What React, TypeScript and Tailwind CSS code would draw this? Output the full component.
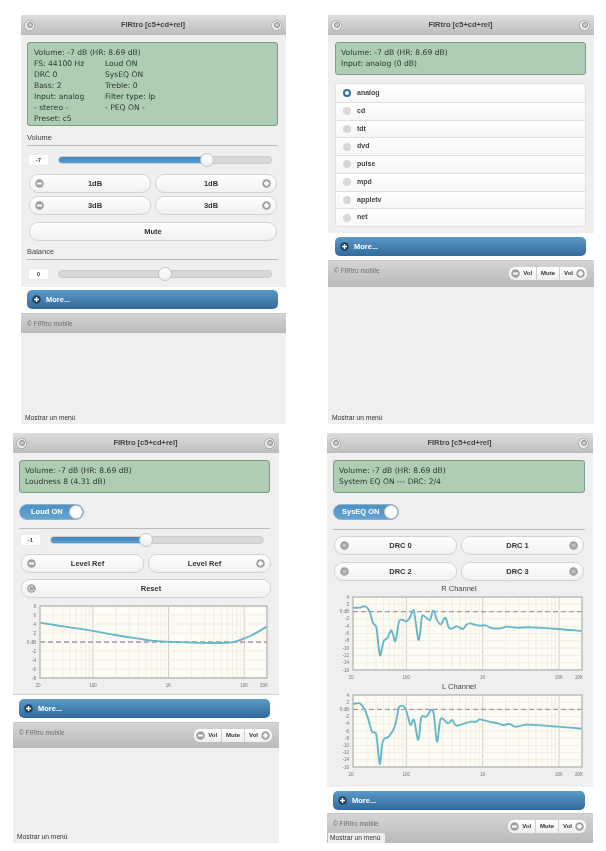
import React from 'react';

type Pt = [number, number];

const smooth = (pts: Pt[]) => {
  let d = `M${pts[0][0]} ${pts[0][1]}`;
  for (let i = 0; i < pts.length - 1; i++) {
    const p0 = pts[i - 1] || pts[i];
    const p1 = pts[i];
    const p2 = pts[i + 1];
    const p3 = pts[i + 2] || p2;
    d += `C${p1[0] + (p2[0] - p0[0]) / 6} ${p1[1] + (p2[1] - p0[1]) / 6} ${p2[0] - (p3[0] - p1[0]) / 6} ${p2[1] - (p3[1] - p1[1]) / 6} ${p2[0]} ${p2[1]}`;
  }
  return d;
};

const toPlot = (pts: number[][], ox: number, oy: number): Pt[] => pts.map(([x, y]) => [(x - ox) / 3, (y - oy) / 3]);

const freqs = [30, 40, 50, 60, 70, 80, 90, 100, 200, 300, 400, 500, 600, 700, 800, 900, 1000, 2000, 3000, 4000, 5000, 6000, 7000, 8000, 9000, 10000];

const Chart: React.FC<{ left: number; w: number; h: number; labels: string[]; zero: number; pts: Pt[] }> = ({ left, w, h, labels, zero, pts }) => {
  const top = 3;
  const step = h / (labels.length - 1);
  const fx = (f: number) => left + (w * Math.log10(f / 20)) / 3;
  return (
    <svg width={left + w + 4} height={top + h + 14} className="block" style={{ fontFamily: '"Liberation Sans", sans-serif' }}>
      <rect x={left} y={top} width={w} height={h} fill="#fdfcf4" />
      {freqs.map((f) => (
        <line key={f} x1={fx(f)} x2={fx(f)} y1={top} y2={top + h} stroke={[100, 1000, 10000].includes(f) ? '#cfcfc8' : '#f0eee2'} strokeWidth="1" />
      ))}
      {labels.map((l, i) => (
        <g key={l}>
          <line x1={left} x2={left + w} y1={top + i * step} y2={top + i * step} stroke="#f0eee2" />
          <text x={left - 4} y={top + i * step + 1.5} fontSize="4.5" textAnchor="end" fill="#777">{l}</text>
        </g>
      ))}
      <line x1={left} x2={left + w} y1={top + zero * step} y2={top + zero * step} stroke="#a896a8" strokeWidth="1.4" strokeDasharray="5 3" />
      <path d={smooth(pts.map(([x, y]) => [x + left, y + top] as Pt))} fill="none" stroke="#66b8c8" strokeWidth="1.9" strokeLinejoin="round" />
      <rect x={left} y={top} width={w} height={h} fill="none" stroke="#b0b0b0" strokeWidth="1.2" />
      {[['20', 20], ['100', 100], ['1K', 1000], ['10K', 10000], ['20K', 20000]].map(([l, f]) => (
        <text key={l} x={fx(f as number) - (f === 20 ? 2 : f === 20000 ? 3 : 0)} y={top + h + 9} fontSize="4.5" textAnchor="middle" fill="#777">{l}</text>
      ))}
    </svg>
  );
};

const Glyph: React.FC<{ kind: 'minus' | 'plus' | 'reset' | 'grid' }> = ({ kind }) => (
  <svg width="9" height="9" viewBox="0 0 18 18" className="shrink-0">
    <circle cx="9" cy="9" r="8.5" fill="#a0a0a0" />
    {kind === 'minus' && <rect x="4" y="7" width="10" height="4" fill="#fff" />}
    {kind === 'plus' && <path d="M4 7h3V4h4v3h3v4h-3v3H7v-3H4z" fill="#fff" />}
    {kind === 'reset' && <path d="M12.5 6.5A4.6 4.6 0 1 0 13.4 10" fill="none" stroke="#fff" strokeWidth="2" />}
    {kind === 'grid' && <path d="M5 6.5h8M5 9h8M5 11.5h8" stroke="#d8d8d8" strokeWidth="1.3" />}
  </svg>
);

const Ring: React.FC = () => (
  <span className="w-[11px] h-[11px] rounded-full bg-[#eeeeee] border border-[#acacac] flex items-center justify-center">
    <span className="w-[6px] h-[6px] rounded-full bg-[#cccccc] border border-[#888888]" />
  </span>
);

const Header: React.FC = () => (
  <div className="h-[20px] shrink-0 flex items-center justify-between pl-[3px] pr-[4px] bg-gradient-to-b from-[#dedede] to-[#bcbcbc]">
    <Ring />
    <span className="text-[7.5px] font-bold text-[#444]">FIRtro [c5+cd+rel]</span>
    <Ring />
  </div>
);

const Lcd: React.FC<{ className?: string; children: React.ReactNode }> = ({ className, children }) => (
  <div className={`mt-[7px] rounded-[3px] border border-[#7d9c85] bg-[#afcdb2] px-[5px] pb-px text-[7.6px] leading-[11px] text-[#2d3a30] font-['DejaVu_Sans',sans-serif] flex flex-col justify-center ${className ?? ''}`}>
    {children}
  </div>
);

const Label: React.FC<{ children: React.ReactNode; className?: string }> = ({ children, className }) => (
  <div className={`h-[11px] text-[7.5px] leading-[11px] text-[#444] ${className ?? ''}`}>{children}</div>
);

const Rule: React.FC<{ className?: string }> = ({ className }) => <div className={`h-px bg-[#bcbcbc] ${className ?? ''}`} />;

const SliderRow: React.FC<{ value: string; pct: number; className?: string; filled?: boolean }> = ({ value, pct, className, filled = true }) => (
  <div className={`flex items-center h-[12px] ${className ?? ''}`}>
    <div className="ml-px w-[21px] h-[12px] rounded-[2px] bg-white border border-[#ececec] text-[6px] font-bold leading-[10px] text-center text-[#444]">{value}</div>
    <div className="relative ml-[9px] w-[214px] h-[8px] rounded-full bg-[#d8d8d8] border border-[#cccccc]">
      {filled && <div className="h-full rounded-full bg-gradient-to-b from-[#3f86bd] to-[#5b9fd0]" style={{ width: `${pct}%` }} />}
      <div className="absolute top-1/2 -translate-y-1/2 -translate-x-1/2 w-[14px] h-[14px] rounded-full bg-gradient-to-b from-white to-[#eeeeee] border border-[#c4c4c4]" style={{ left: `${pct}%` }} />
    </div>
  </div>
);

const Btn: React.FC<{ text: string; left?: 'minus' | 'reset' | 'grid'; right?: 'plus' | 'grid'; className?: string }> = ({ text, left, right, className }) => (
  <div className={`relative h-[19px] flex-1 rounded-[9px] border border-[#d4d4d4] bg-gradient-to-b from-white to-[#f0f0f0] flex items-center justify-center text-[7.5px] font-bold text-[#333] ${left ? 'pl-[10px]' : ''} ${right ? 'pr-[10px]' : ''} ${className ?? ''}`}>
    {left && <span className="absolute left-[5px] top-[4px] flex"><Glyph kind={left} /></span>}
    {text}
    {right && <span className="absolute right-[5px] top-[4px] flex"><Glyph kind={right} /></span>}
  </div>
);

const More: React.FC<{ className?: string }> = ({ className }) => (
  <div className={`bg-white ${className ?? ''}`}>
    <div className="h-[19px] rounded-[5px] bg-gradient-to-b from-[#5a9bc8] to-[#33699c] flex items-center px-[5px] gap-[5px] text-[7.5px] font-bold text-white">
      <svg width="9" height="9" viewBox="0 0 18 18">
        <circle cx="9" cy="9" r="8.5" fill="#1c3f60" />
        <path d="M4 7.5h3.5V4h3v3.5H14v3h-3.5V14h-3v-3.5H4z" fill="#fff" />
      </svg>
      More...
    </div>
  </div>
);

const VolGroup: React.FC = () => (
  <div className="flex h-[13px] rounded-[6px] bg-gradient-to-b from-white to-[#efefef] text-[6px] font-bold text-[#333]">
    <div className="flex items-center gap-[3px] pl-[2px] pr-[4px] border-r border-[#d0d0d0]"><Glyph kind="minus" />Vol</div>
    <div className="flex items-center px-[4px] border-r border-[#d0d0d0]">Mute</div>
    <div className="flex items-center gap-[3px] pl-[4px] pr-[2px]">Vol<Glyph kind="plus" /></div>
  </div>
);

const Footer: React.FC<{ className?: string; controls?: boolean; children?: React.ReactNode }> = ({ className, controls, children }) => (
  <div className={`relative shrink-0 flex justify-between bg-gradient-to-b from-[#d4d4d4] to-[#bababa] border-t border-[#c8c8c8] pl-[6px] pr-[7px] ${className ?? ''}`}>
    <span className="text-[6.5px] leading-[9px] pt-[5px] text-[#707070]">© FIRtro mobile</span>
    {controls && <div className="pt-[6px]"><VolGroup /></div>}
    {children}
  </div>
);

const Bottom: React.FC<{ className?: string }> = ({ className }) => (
  <div className={`flex-1 flex items-end pb-[2px] pl-[4px] text-[6.7px] leading-[9px] text-[#333] ${className ?? ''}`}>Mostrar un menú</div>
);

const inputs = ['analog', 'cd', 'tdt', 'dvd', 'pulse', 'mpd', 'appletv', 'net'];

const VolumePanel: React.FC = () => (
  <section className="ml-[21px] mt-[15px] w-[265px] h-[409px] flex flex-col bg-[#efefef]">
    <Header />
    <div className="pl-[6px] pr-[8px] pb-[7px]">
      <Lcd className="h-[84px] !justify-start pt-[4px] pl-[6px]">
        <div>Volume: -7 dB (HR: 8.69 dB)</div>
        <div className="grid grid-cols-[71px_1fr]">
          <div>FS: 44100 Hz</div><div>Loud ON</div>
          <div>DRC 0</div><div>SysEQ ON</div>
          <div>Bass: 2</div><div>Treble: 0</div>
          <div>Input: analog</div><div>Filter type: lp</div>
          <div>- stereo -</div><div>- PEQ ON -</div>
          <div>Preset: c5</div>
        </div>
      </Lcd>
      <Label className="mt-[6px]">Volume</Label>
      <Rule className="mt-[2px]" />
      <SliderRow value="-7" pct={70} className="mt-[8px]" />
      <div className="mt-[8px] ml-[2px] mr-px flex gap-[4px]"><Btn text="1dB" left="minus" /><Btn text="1dB" right="plus" /></div>
      <div className="mt-[3px] ml-[2px] mr-px flex gap-[4px]"><Btn text="3dB" left="minus" /><Btn text="3dB" right="plus" /></div>
      <div className="mt-[7px] ml-[2px] mr-px flex"><Btn text="Mute" /></div>
      <Label className="mt-[5px]">Balance</Label>
      <Rule className="mt-[2px]" />
      <SliderRow value="0" pct={50} filled={false} className="mt-[8px]" />
    </div>
    <More className="pl-[6px] pr-[8px] pt-[3px] pb-[4px]" />
    <Footer className="h-[20px]" />
    <Bottom />
  </section>
);

const InputPanel: React.FC = () => (
  <section className="ml-[14px] mt-[15px] w-[266px] h-[409px] flex flex-col bg-[#efefef]">
    <Header />
    <div className="pl-[7px] pr-[8px] pb-[6px]">
      <Lcd className="h-[33px]">
        <div>Volume: -7 dB (HR: 8.69 dB)</div>
        <div>Input: analog (0 dB)</div>
      </Lcd>
      <div className="mt-[8px] rounded-[4px] border border-[#e2e2e2] overflow-hidden">
        {inputs.map((name, i) => (
          <div key={name} className={`h-[17.75px] flex items-center gap-[6px] pl-[7px] bg-gradient-to-b from-white to-[#f6f6f6] text-[7px] font-bold text-[#444] ${i ? 'border-t border-[#e0e0e0]' : ''}`}>
            {i === 0 ? (
              <span className="w-[8px] h-[8px] rounded-full bg-white border-[2px] border-[#2c6ea8]" />
            ) : (
              <span className="w-[8px] h-[8px] rounded-full bg-[#d8d8d8]" />
            )}
            {name}
          </div>
        ))}
      </div>
    </div>
    <More className="pl-[7px] pr-[8px] pt-[4px] pb-[4px]" />
    <Footer className="h-[27px]" controls />
    <Bottom />
  </section>
);

const Toggle: React.FC<{ text: string; className: string }> = ({ text, className }) => (
  <div className={`mt-[11px] h-[16px] rounded-full border border-[#8fb0c8] bg-gradient-to-b from-[#4d92c4] to-[#64a4d2] flex items-center justify-between text-[7.5px] font-bold text-white ${className}`}>
    {text}
    <span className="w-[14px] h-[14px] rounded-full bg-white border border-[#c8c8c8]" />
  </div>
);

const loudCurve = toPlot([[105, 80], [180, 92], [255, 103], [330, 117], [400, 128], [440, 134], [480, 137], [560, 140], [640, 141], [680, 139], [705, 132], [735, 120], [760, 107], [785, 92]], 105, 30);

const LoudPanel: React.FC = () => (
  <section className="ml-[13px] mt-[9px] w-[266px] h-[410px] flex flex-col bg-[#efefef]">
    <Header />
    <div className="pl-[6px] pr-[9px] pb-[2px] border-b border-[#cfcfcf]">
      <Lcd className="h-[33px]">
        <div>Volume: -7 dB (HR: 8.69 dB)</div>
        <div>Loudness 8 (4.31 dB)</div>
      </Lcd>
      <Toggle text="Loud ON" className="w-[65px] pl-[11px]" />
      <Rule className="mt-[8px]" />
      <SliderRow value="-1" pct={45} className="mt-[5px]" />
      <div className="mt-[8px] ml-[2px] mr-[-1px] flex gap-[4px]"><Btn text="Level Ref" left="minus" /><Btn text="Level Ref" right="plus" /></div>
      <div className="mt-[6px] ml-[2px] mr-[-1px] flex"><Btn text="Reset" left="reset" /></div>
      <div className="mt-[5px]">
        <Chart left={21} w={227} h={72} zero={4} labels={['8', '6', '4', '2', '0 dB', '-2', '-4', '-6', '-8']} pts={loudCurve} />
      </div>
    </div>
    <More className="pl-[6px] pr-[9px] pt-[4px] pb-[4px]" />
    <Footer className="h-[26px]" controls />
    <Bottom />
  </section>
);

const chartLabels = ['4', '2', '0 dB', '-2', '-4', '-6', '-8', '-10', '-12', '-14', '-16'];

const rCurve = toPlot([[85, 69], [105, 69], [120, 65], [130, 72], [138, 90], [145, 115], [155, 128], [160, 170], [166, 212], [172, 190], [178, 168], [188, 160], [199, 137], [205, 150], [212, 170], [218, 140], [224, 108], [235, 106], [245, 110], [255, 100], [266, 76], [272, 105], [281, 165], [287, 140], [292, 95], [302, 97], [316, 106], [326, 77], [338, 108], [349, 119], [362, 99], [373, 130], [385, 130], [397, 125], [415, 133], [425, 120], [437, 116], [450, 120], [465, 123], [483, 122], [500, 130], [530, 131], [545, 126], [580, 129], [620, 128], [700, 133], [770, 139]], 85, 37);

const lCurve = toPlot([[85, 72], [105, 70], [118, 85], [130, 115], [142, 155], [155, 165], [165, 252], [172, 195], [178, 177], [190, 172], [200, 160], [212, 135], [222, 85], [232, 77], [242, 85], [250, 110], [258, 135], [268, 120], [281, 180], [290, 113], [305, 110], [325, 92], [337, 185], [348, 117], [370, 130], [382, 120], [395, 137], [420, 130], [440, 125], [455, 125], [465, 118], [490, 124], [520, 130], [535, 135], [555, 132], [570, 140], [590, 137], [610, 134], [700, 140], [770, 146]], 85, 45);

const EqPanel: React.FC = () => (
  <section className="ml-[13px] mt-[9px] w-[266px] h-[410px] flex flex-col bg-[#efefef]">
    <Header />
    <div className="pl-[6px] pr-[8px] pb-[6px]">
      <Lcd className="h-[33px]">
        <div>Volume: -7 dB (HR: 8.69 dB)</div>
        <div>System EQ ON --- DRC: 2/4</div>
      </Lcd>
      <Toggle text="SysEQ ON" className="w-[66px] pl-[8px]" />
      <Rule className="mt-[9px]" />
      <div className="mt-[6px] mx-px flex gap-[4px]"><Btn text="DRC 0" left="grid" /><Btn text="DRC 1" right="grid" /></div>
      <div className="mt-[7px] mx-px flex gap-[4px]"><Btn text="DRC 2" left="grid" /><Btn text="DRC 3" right="grid" /></div>
      <div className="mt-[2px] h-[11px] text-[7.5px] leading-[11px] text-center text-[#444]">R Channel</div>
      <Chart left={20} w={229} h={73} zero={2} labels={chartLabels} pts={rCurve} />
      <div className="mt-[-3px] h-[11px] text-[7.5px] leading-[11px] text-center text-[#444]">L Channel</div>
      <Chart left={20} w={229} h={72} zero={2} labels={chartLabels} pts={lCurve} />
    </div>
    <More className="pl-[6px] pr-[8px] pt-[4px] pb-[3px]" />
    <Footer className="flex-1" controls>
      <div className="absolute left-px bottom-0 h-[10px] w-[57px] bg-[#efefef] rounded-tr-[2px] text-[6.7px] leading-[10px] pl-[2px] text-[#333]">Mostrar un menú</div>
    </Footer>
  </section>
);

const App: React.FC = () => (
  <div className="w-[606px] h-[851px] bg-white overflow-hidden grid grid-cols-[314px_292px] grid-rows-[424px_427px] font-['Liberation_Sans',sans-serif] blur-[0.35px]">
    <VolumePanel />
    <InputPanel />
    <LoudPanel />
    <EqPanel />
  </div>
);

export default App;
